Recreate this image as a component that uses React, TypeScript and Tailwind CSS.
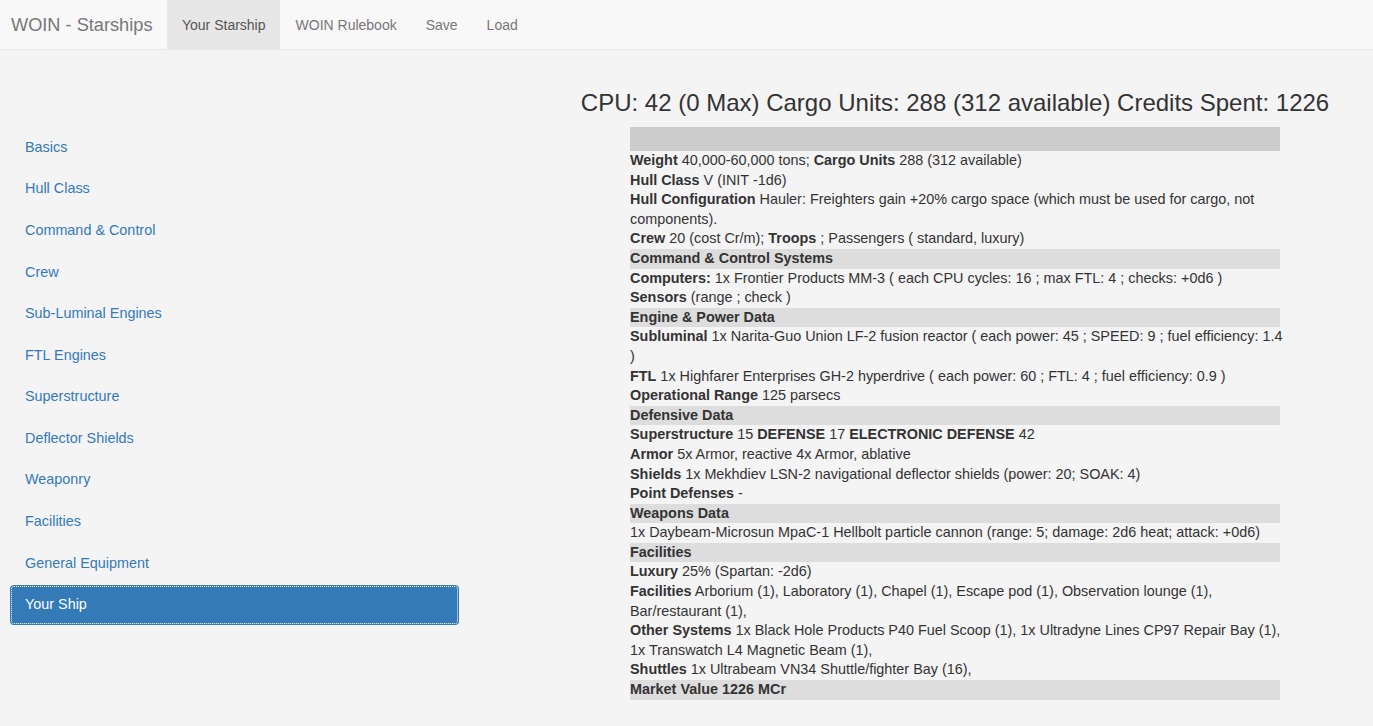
import React from "react";

const navItems = [
  "Basics",
  "Hull Class",
  "Command & Control",
  "Crew",
  "Sub-Luminal Engines",
  "FTL Engines",
  "Superstructure",
  "Deflector Shields",
  "Weaponry",
  "Facilities",
  "General Equipment",
  "Your Ship",
];

function Row({ children }: { children: React.ReactNode }) {
  return <div className="whitespace-nowrap">{children}</div>;
}

function Head({ children }: { children: React.ReactNode }) {
  return <div className="bg-[#dddddd] font-bold">{children}</div>;
}

export default function App() {
  return (
    <div
      className="min-h-screen bg-[#f4f4f4] text-[#333333] text-[14.4px] leading-[19.6px]"
      style={{ fontFamily: '"Liberation Sans", Arial, sans-serif' }}
    >
      <nav className="h-[50px] bg-[#f8f8f8] border-b border-[#e7e7e7] flex items-stretch text-[14px]">
        <div className="pl-[11px] pr-[15px] pt-[2px] flex items-center text-[18.2px] text-[#777777]">
          WOIN - Starships
        </div>
        <a className="px-[14.5px] pt-[2px] flex items-center bg-[#e7e7e7] text-[#555555]">Your Starship</a>
        <a className="px-[14.5px] pt-[2px] flex items-center text-[#777777] ml-[1px]">WOIN Rulebook</a>
        <a className="px-[14.5px] pt-[2px] flex items-center text-[#777777]">Save</a>
        <a className="px-[14.5px] pt-[2px] flex items-center text-[#777777]">Load</a>
      </nav>
      <div className="flex">
        <div className="w-[537px] shrink-0 pl-[10px] pt-[78px]">
          <ul className="w-[449px] flex flex-col gap-[2.4px]">
            {navItems.map((item) =>
              item === "Your Ship" ? (
                <li
                  key={item}
                  className="h-[39.2px] rounded-[4px] bg-[#337ab7] text-white pl-[15px] flex items-center outline-1 outline-dotted outline-white -outline-offset-2"
                >
                  {item}
                </li>
              ) : (
                <li key={item} className="h-[39.2px] rounded-[4px] text-[#337ab7] pl-[15px] flex items-center">
                  {item}
                </li>
              )
            )}
          </ul>
        </div>
        <div className="flex-1 flex flex-col items-center">
          <h3 className="mt-[40px] text-[24px] leading-[26px] font-normal whitespace-nowrap">
            CPU: 42 (0 Max) Cargo Units: 288 (312 available) Credits Spent: 1226
          </h3>
          <div className="mt-[11px] w-[650px]">
            <div className="h-[24px] bg-[#cccccc]"></div>
            <Row>
              <b>Weight</b> 40,000-60,000 tons; <b>Cargo Units</b> 288 (312 available)
            </Row>
            <Row>
              <b>Hull Class</b> V (INIT -1d6)
            </Row>
            <Row>
              <b>Hull Configuration</b> Hauler: Freighters gain +20% cargo space (which must be used for cargo, not
              <br />
              components).
            </Row>
            <Row>
              <b>Crew</b> 20 (cost Cr/m); <b>Troops</b> ; Passengers ( standard, luxury)
            </Row>
            <Head>Command &amp; Control Systems</Head>
            <Row>
              <b>Computers:</b> 1x Frontier Products MM-3 ( each CPU cycles: 16 ; max FTL: 4 ; checks: +0d6 )
            </Row>
            <Row>
              <b>Sensors</b> (range ; check )
            </Row>
            <Head>Engine &amp; Power Data</Head>
            <Row>
              <b>Subluminal</b> 1x Narita-Guo Union LF-2 fusion reactor ( each power: 45 ; SPEED: 9 ; fuel efficiency: 1.4
              <br />)
            </Row>
            <Row>
              <b>FTL</b> 1x Highfarer Enterprises GH-2 hyperdrive ( each power: 60 ; FTL: 4 ; fuel efficiency: 0.9 )
            </Row>
            <Row>
              <b>Operational Range</b> 125 parsecs
            </Row>
            <Head>Defensive Data</Head>
            <Row>
              <b>Superstructure</b> 15 <b>DEFENSE</b> 17 <b>ELECTRONIC DEFENSE</b> 42
            </Row>
            <Row>
              <b>Armor</b> 5x Armor, reactive 4x Armor, ablative
            </Row>
            <Row>
              <b>Shields</b> 1x Mekhdiev LSN-2 navigational deflector shields (power: 20; SOAK: 4)
            </Row>
            <Row>
              <b>Point Defenses</b> -
            </Row>
            <Head>Weapons Data</Head>
            <Row>1x Daybeam-Microsun MpaC-1 Hellbolt particle cannon (range: 5; damage: 2d6 heat; attack: +0d6)</Row>
            <Head>Facilities</Head>
            <Row>
              <b>Luxury</b> 25% (Spartan: -2d6)
            </Row>
            <Row>
              <b>Facilities</b> Arborium (1), Laboratory (1), Chapel (1), Escape pod (1), Observation lounge (1),
              <br />
              Bar/restaurant (1),
            </Row>
            <Row>
              <b>Other Systems</b> 1x Black Hole Products P40 Fuel Scoop (1), 1x Ultradyne Lines CP97 Repair Bay (1),
              <br />
              1x Transwatch L4 Magnetic Beam (1),
            </Row>
            <Row>
              <b>Shuttles</b> 1x Ultrabeam VN34 Shuttle/fighter Bay (16),
            </Row>
            <Head>Market Value 1226 MCr</Head>
          </div>
        </div>
      </div>
    </div>
  );
}
